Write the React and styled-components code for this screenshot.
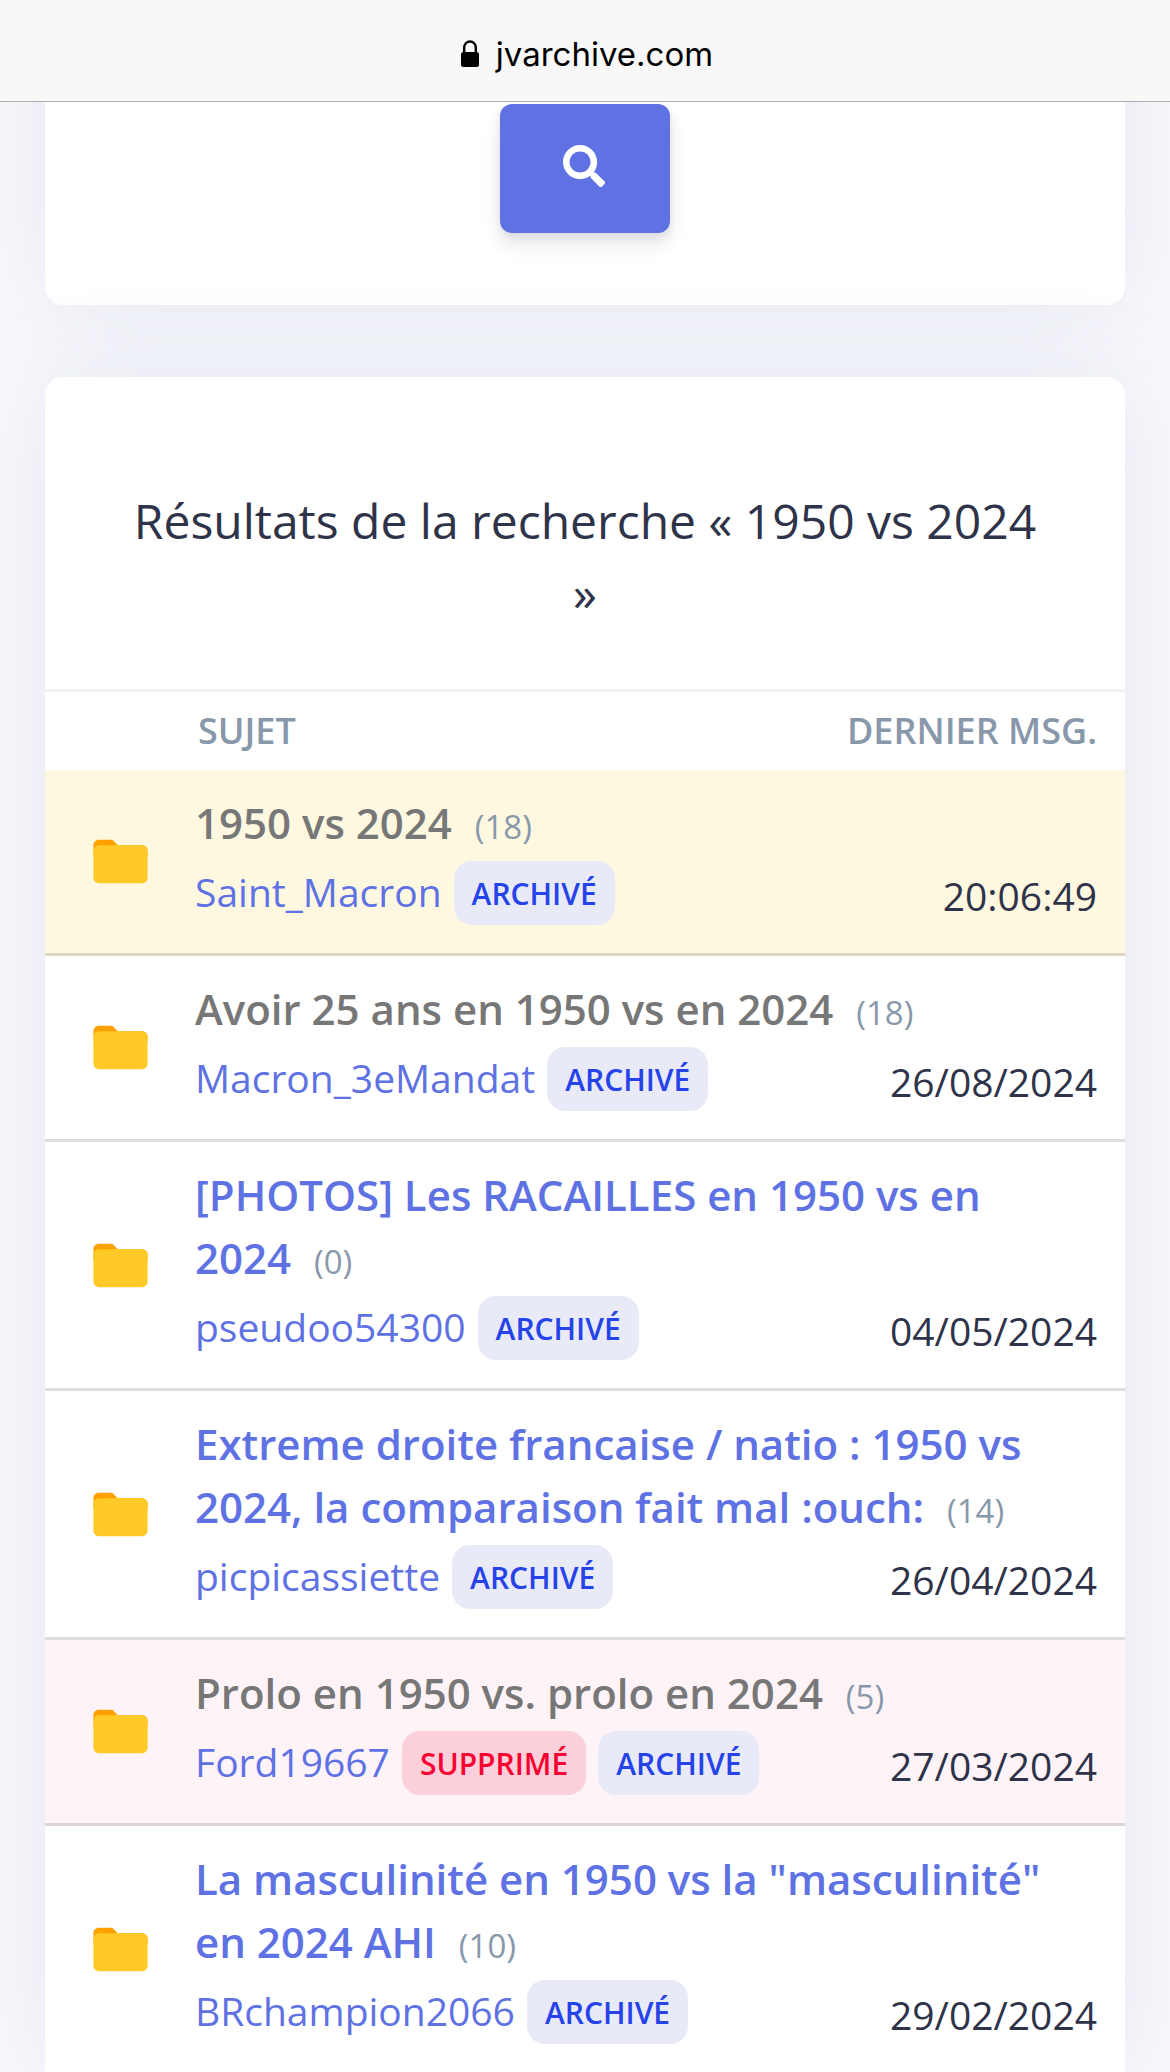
import React from "react";
import styled, { createGlobalStyle } from "styled-components";
import { FaSearch } from "react-icons/fa";

const GlobalStyle = createGlobalStyle`
  *, *::before, *::after { box-sizing: border-box; }
  body {
    margin: 0;
    background: #f8f9fe;
    color: #2f3349;
    font-family: "Open Sans", "Noto Sans", sans-serif;
    font-size: 39px;
    line-height: 58px;
  }
`;

const AddressBar = styled.header`
  position: sticky;
  top: 0;
  z-index: 1;
  display: flex;
  align-items: center;
  justify-content: center;
  gap: 16px;
  height: 102px;
  padding: 6px 0 0 3px;
  background: #f8f8f8;
  border-bottom: 1px solid #b0b0b4;
  color: #000;
  font-family: Inter, Roboto, sans-serif;
  font-size: 33px;
  line-height: 42px;
`;

const LockIcon = styled.svg`
  width: 20px;
  height: 28px;
`;

const Page = styled.main`
  display: flex;
  flex-direction: column;
  gap: 72px;
  padding: 0 45px;
`;

const Card = styled.section`
  background: #fff;
  box-shadow: 0 0 96px rgba(128, 132, 155, 0.15);
`;

/* The search card starts underneath the sticky address bar. */
const SearchCard = styled(Card)`
  display: flex;
  justify-content: center;
  margin-top: -96px;
  padding: 98px 72px 72px;
  border-radius: 18px;
`;

const ResultsCard = styled(Card)`
  border-radius: 18px 18px 0 0;
`;

const SearchButton = styled.button`
  display: flex;
  align-items: center;
  justify-content: center;
  width: 170px;
  height: 129px;
  padding: 0 2px 6px 0;
  border: 0;
  border-radius: 12px;
  background: #5e72e4;
  color: #fff;
  font-size: 42px;
  box-shadow: 0 12px 18px rgba(50, 50, 93, 0.11), 0 3px 9px rgba(0, 0, 0, 0.08);
  cursor: pointer;
`;

const ResultsTitle = styled.h1`
  margin: 0;
  padding: 108px 84px 60px;
  font-size: 48px;
  font-weight: 400;
  line-height: 72px;
  text-align: center;
`;

const TopicTable = styled.table`
  width: 100%;
  border-top: 3px solid #f1f1f3;
  border-collapse: separate;
  border-spacing: 0;
`;

const HeadCell = styled.th`
  width: ${(p) => p.$width || "auto"};
  padding: 20px ${(p) => (p.$end ? 28 : 0)}px 20px 3px;
  color: #8898aa;
  font-size: 36px;
  font-weight: 600;
  line-height: 38px;
  text-align: ${(p) => (p.$end ? "right" : "left")};
  text-transform: uppercase;
  white-space: nowrap;
`;

const rowColors = { pinned: "#fff8e1", deleted: "#fef4f8" };

const Topic = styled.tbody`
  --rule: 3px solid rgba(0, 0, 0, 0.13);
  background: ${(p) => rowColors[p.$kind] || "transparent"};
  &:last-child { --rule: 0; }
`;

const IconCell = styled.td`
  padding: 0;
  border-bottom: var(--rule);
  text-align: center;
  vertical-align: middle;
`;

const FolderIcon = styled.svg`
  display: block;
  width: 65px;
  height: 65px;
  margin: 0 auto;
`;

const TitleCell = styled.td`
  padding: 21px 63px 0 0;
  font-size: 42px;
  line-height: 63px;
`;

const TitleLink = styled.a`
  color: ${(p) => (p.$visited ? "#777" : "#5e72e4")};
  font-weight: 600;
  text-decoration: none;
`;

const Count = styled.span`
  margin-left: 12px;
  color: #8898aa;
  font-size: 33px;
  line-height: 48px;
`;

const MetaCell = styled.td`
  padding: 0 0 21px;
  border-bottom: var(--rule);
`;

const Meta = styled.div`
  display: flex;
  align-items: center;
  gap: 12px;
  height: 78px;
  white-space: nowrap;
`;

const AuthorLink = styled.a`
  padding-bottom: 2px;
  color: #5e72e4;
  text-decoration: none;
`;

const Badge = styled.span`
  padding: 2px 18px 0;
  border-radius: 18px;
  background: ${(p) => (p.$danger ? "#fbd0da" : "#e8eaf8")};
  color: ${(p) => (p.$danger ? "#f80031" : "#2643e9")};
  font-size: 30px;
  font-weight: 600;
  line-height: 62px;
  text-transform: uppercase;
`;

const DateCell = styled.td`
  padding: 0 28px 28px 0;
  border-bottom: var(--rule);
  text-align: right;
  vertical-align: bottom;
  white-space: nowrap;
`;

const topics = [
  { title: "1950 vs 2024", count: 18, author: "Saint_Macron", date: "20:06:49", visited: true, kind: "pinned" },
  { title: "Avoir 25 ans en 1950 vs en 2024", count: 18, author: "Macron_3eMandat", date: "26/08/2024", visited: true },
  { title: "[PHOTOS] Les RACAILLES en 1950 vs en 2024", count: 0, author: "pseudoo54300", date: "04/05/2024" },
  { title: "Extreme droite francaise / natio : 1950 vs 2024, la comparaison fait mal :ouch:", count: 14, author: "picpicassiette", date: "26/04/2024" },
  { title: "Prolo en 1950 vs. prolo en 2024", count: 5, author: "Ford19667", date: "27/03/2024", visited: true, kind: "deleted" },
  { title: 'La masculinité en 1950 vs la "masculinité" en 2024 AHI', count: 10, author: "BRchampion2066", date: "29/02/2024" },
];

function Folder() {
  return (
    <FolderIcon viewBox="0 0 48 48" aria-hidden="true">
      <path fill="#FFA000" d="M40 12H22l-4-4H8c-2.2 0-4 1.8-4 4v8h40v-4c0-2.2-1.8-4-4-4z" />
      <path fill="#FFCA28" d="M40 12H8c-2.2 0-4 1.8-4 4v20c0 2.2 1.8 4 4 4h32c2.2 0 4-1.8 4-4V16c0-2.2-1.8-4-4-4z" />
    </FolderIcon>
  );
}

function TopicRows({ topic }) {
  return (
    <Topic $kind={topic.kind}>
      <tr>
        <IconCell rowSpan={2}>
          <Folder />
        </IconCell>
        <TitleCell colSpan={2}>
          <TitleLink href="#" $visited={topic.visited}>{topic.title}</TitleLink>{" "}
          <Count>({topic.count})</Count>
        </TitleCell>
      </tr>
      <tr>
        <MetaCell>
          <Meta>
            <AuthorLink href="#">{topic.author}</AuthorLink>
            {topic.kind === "deleted" && <Badge $danger>Supprimé</Badge>}
            <Badge>Archivé</Badge>
          </Meta>
        </MetaCell>
        <DateCell>{topic.date}</DateCell>
      </tr>
    </Topic>
  );
}

export default function App() {
  return (
    <>
      <GlobalStyle />
      <AddressBar>
        <LockIcon viewBox="0 0 20 28" aria-hidden="true">
          <rect x="1" y="12" width="18" height="15" rx="2.5" />
          <path d="M4.2 13V7.5a5.8 6 0 0 1 11.6 0V13" fill="none" stroke="#000" strokeWidth="2.4" />
        </LockIcon>
        <span>jvarchive.com</span>
      </AddressBar>
      <Page>
        <SearchCard>
          <SearchButton type="button" aria-label="Rechercher">
            <FaSearch />
          </SearchButton>
        </SearchCard>
        <ResultsCard>
          <ResultsTitle>Résultats de la recherche « 1950 vs 2024 »</ResultsTitle>
          <TopicTable>
            <thead>
              <tr>
                <HeadCell $width="150px" />
                <HeadCell scope="col">Sujet</HeadCell>
                <HeadCell scope="col" $end>Dernier msg.</HeadCell>
              </tr>
            </thead>
            {topics.map((topic) => (
              <TopicRows key={topic.title} topic={topic} />
            ))}
          </TopicTable>
        </ResultsCard>
      </Page>
    </>
  );
}
